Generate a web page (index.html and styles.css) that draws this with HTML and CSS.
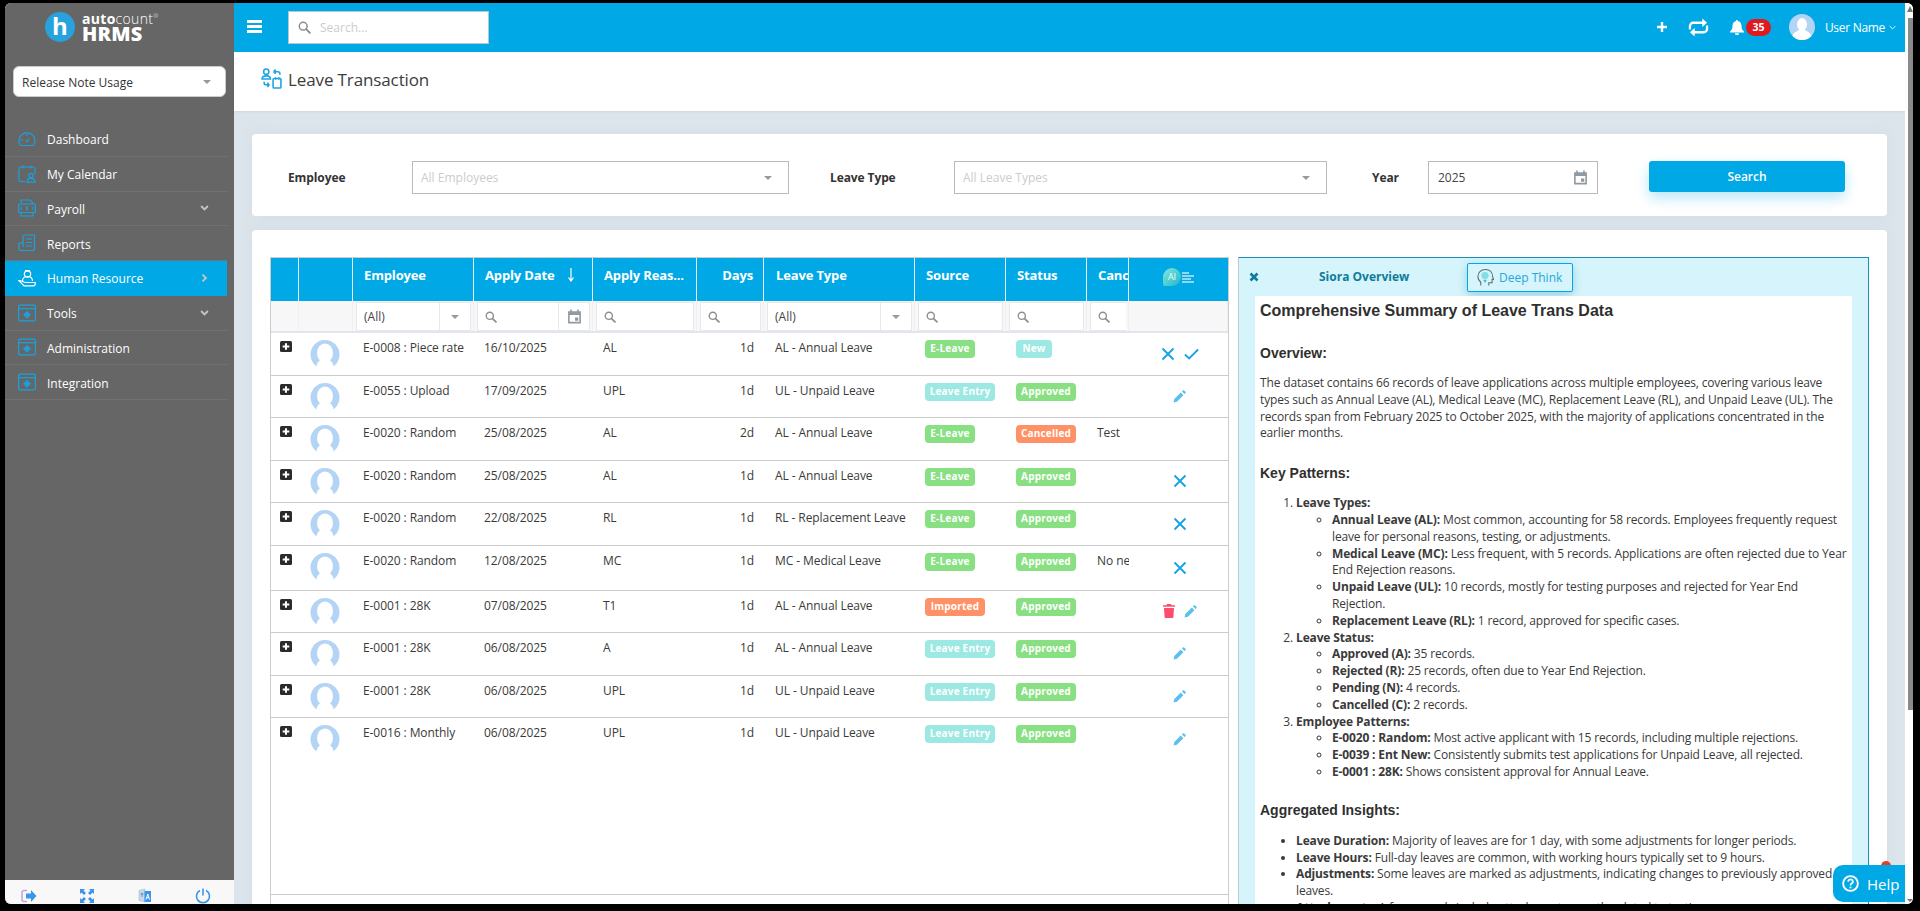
FILE: index.html
```html
<!DOCTYPE html>
<html lang="en">
<head>
<meta charset="utf-8">
<title>Leave Transaction</title>
<link rel="stylesheet" href="styles.css">
</head>
<body>
<svg class="defs" width="0" height="0" aria-hidden="true">
  <symbol id="i-search" viewBox="0 0 14 14"><circle cx="5.6" cy="5.6" r="4.2" fill="none" stroke="currentColor" stroke-width="1.6"/><path d="M8.8 8.8l4 4" stroke="currentColor" stroke-width="2" stroke-linecap="round"/></symbol>
  <symbol id="i-cal" viewBox="0 0 14 14"><path fill="currentColor" d="M1 2h2V.5h1.5V2h5V.5H11V2h2v11.5H1zM2.5 5.5v6.5h9V5.5zM7.5 8h3v3h-3z"/></symbol>
  <symbol id="i-pencil" viewBox="0 0 14 14"><path fill="currentColor" d="M0.6 13.4l.8-3.6 7-7 2.8 2.8-7 7zM9.6 1.6l1-1a1 1 0 0 1 1.4 0l1.4 1.4a1 1 0 0 1 0 1.4l-1 1z"/></symbol>
  <symbol id="i-x" viewBox="0 0 14 14"><path d="M1.5 1.5l11 11M12.5 1.5l-11 11" stroke="currentColor" stroke-width="1.9" fill="none"/></symbol>
  <symbol id="i-check" viewBox="0 0 16 12"><path d="M1 6.5l4.5 4.2L15 1.2" stroke="currentColor" stroke-width="2" fill="none"/></symbol>
  <symbol id="i-trash" viewBox="0 0 12 14"><path fill="currentColor" d="M4 0h4l.6 1.2H12v1.6H0V1.200h3.400zM1 4h10l-.6 9a1 1 0 0 1-1 1H2.600a1 1 0 0 1-1-1z"/></symbol>
  <symbol id="i-plusbox" viewBox="0 0 12 11"><rect width="12" height="11" rx="1.500" fill="#2b2b2b"/><path d="M6 2.200v6.600M2.700 5.500h6.600" stroke="#fff" stroke-width="2"/></symbol>
  <symbol id="i-avatar" viewBox="0 0 30 27"><circle cx="15" cy="14.500" r="14.500" fill="#b3d4f5"/><ellipse cx="15" cy="13" rx="8" ry="9.500" fill="#fff"/><path d="M6.500 27c0-4 3-7 4.500-7h8c1.500 0 4.500 3 4.500 7z" fill="#fff"/></symbol>
  <symbol id="i-window" viewBox="0 0 18 17"><rect x=".6" y=".6" width="16.800" height="15.800" rx="1.500" fill="none" stroke="currentColor" stroke-width="1.200"/><path d="M1 4.200h16" stroke="currentColor" stroke-width="1.200"/><circle cx="9" cy="10.200" r="2.800" fill="currentColor"/><circle cx="9" cy="10.200" r="1" fill="#666"/><path d="M9 6.400v7.600M5.200 10.200h7.600" stroke="currentColor" stroke-width="1.200"/></symbol>
  <symbol id="i-chev" viewBox="0 0 10 7"><path d="M1 1.200l4 4 4-4" fill="none" stroke="currentColor" stroke-width="2.200"/></symbol>
</svg>

<div class="window">
  <aside class="sidebar">
    <div class="logo">
      <span class="logo-mark">h</span>
      <span class="logo-text"><span class="logo-top"><b>auto</b>count<sup>®</sup></span><span class="logo-hrms">HRMS</span></span>
    </div>
    <div class="tenant"><span>Release Note Usage</span><i class="caret"></i></div>
    <nav class="menu">
      <a class="item"><svg class="ic" viewBox="0 0 18 16"><path d="M2.500 14.500A8 8 0 1 1 15.500 14.500z" fill="none" stroke="currentColor" stroke-width="1.200"/><path d="M7.500 10l5-3.500-3.500 5z" fill="currentColor"/><path d="M3 9h2M9 3v2" stroke="currentColor"/></svg><span>Dashboard</span></a>
      <a class="item"><svg class="ic" viewBox="0 0 18 18"><path d="M7 16.500H2.500a1.500 1.500 0 0 1-1.500-1.500V3.500A1.500 1.500 0 0 1 2.500 2h13A1.500 1.500 0 0 1 17 3.500V9" fill="none" stroke="currentColor" stroke-width="1.200"/><path d="M5 .5v3M13 .5v3" stroke="currentColor" stroke-width="1.200"/><circle cx="13" cy="10.500" r="2.200" fill="none" stroke="currentColor" stroke-width="1.200"/><path d="M9 17.200c0-5 8-5 8 0z" fill="none" stroke="currentColor" stroke-width="1.200"/></svg><span>My Calendar</span></a>
      <a class="item"><svg class="ic" viewBox="0 0 18 18"><path d="M3 4V1h9l3 3v1M15 13v4H3v-3" fill="none" stroke="currentColor" stroke-width="1.100"/><rect x=".6" y="5" width="16.800" height="8.500" rx="1" fill="none" stroke="currentColor" stroke-width="1.200"/><path d="M9 7v4.500" stroke="currentColor" stroke-width="1.400"/><path d="M3 7.500v3.500M15 7.500v3.500" stroke="currentColor"/></svg><span>Payroll</span><svg class="chev" viewBox="0 0 10 7"><use href="#i-chev"/></svg></a>
      <a class="item"><svg class="ic" viewBox="0 0 18 18"><path d="M5 13V2.500A1.500 1.500 0 0 1 6.500 1h10v13.500a2 2 0 0 1-2 2H2.500A1.800 1.800 0 0 1 1 14.500V9h4" fill="none" stroke="currentColor" stroke-width="1.200"/><path d="M8 5h6M8 8.500h6M8 12h6" stroke="currentColor" stroke-width="1.200"/></svg><span>Reports</span></a>
      <a class="item active"><svg class="ic" viewBox="0 0 18 18"><circle cx="9.500" cy="5" r="3.200" fill="none" stroke="currentColor" stroke-width="1.200"/><path d="M7 1.800h5" stroke="currentColor" stroke-width="1.600"/><path d="M4.500 12c0-3 2-4.500 5-4.500s5 1.500 5 4.500" fill="none" stroke="currentColor" stroke-width="1.200"/><path d="M.8 11.500c3 0 4.500 2 7 2h9.400v1.500c0 1-1 1.800-2 1.800H6z" fill="none" stroke="currentColor" stroke-width="1.200"/></svg><span>Human Resource</span><svg class="chev right" viewBox="0 0 10 7"><use href="#i-chev"/></svg></a>
      <a class="item"><svg class="ic"><use href="#i-window"/></svg><span>Tools</span><svg class="chev" viewBox="0 0 10 7"><use href="#i-chev"/></svg></a>
      <a class="item"><svg class="ic"><use href="#i-window"/></svg><span>Administration</span></a>
      <a class="item"><svg class="ic"><use href="#i-window"/></svg><span>Integration</span></a>
    </nav>
    <div class="side-foot">
      <svg viewBox="0 0 16 14"><path d="M6 1.500H3A2 2 0 0 0 1 3.500v7a2 2 0 0 0 2 2h3" fill="none" stroke="#b9a6e8" stroke-width="1.500"/><path d="M5 4.500h5V1l5.500 6-5.500 6V9.500H5z" fill="#3b95e8"/></svg>
      <svg viewBox="0 0 16 16"><path fill="#3b95e8" d="M1 1h5L4.500 2.500 7 5 5 7 2.500 4.500 1 6zM15 1v5l-1.500-1.500L11 7 9 5l2.500-2.500L10 1zM1 15v-5l1.500 1.500L5 9l2 2-2.500 2.500L6 15zM15 15h-5l1.500-1.500L9 11l2-2 2.500 2.500L15 10z"/></svg>
      <svg viewBox="0 0 14 16"><path d="M1 2.500l6-1.500v13l-6-1.500z" fill="#c8d9ee" stroke="#9db8d8" stroke-width=".6"/><path d="M6.500 3H13v11H6.500z" fill="#3b95e8"/><path d="M8 11.500L9.800 6l1.700 5.500M8.700 9.800h2.200" stroke="#fff" fill="none"/><path d="M2.500 6h3M4 4.500V9" stroke="#5c7fa8" stroke-width=".8"/></svg>
      <svg viewBox="0 0 16 16"><path d="M5 2.500a6.500 6.500 0 1 0 6 0" fill="none" stroke="#3b95e8" stroke-width="1.600"/><path d="M8 .5v7" stroke="#3b95e8" stroke-width="1.600"/></svg>
    </div>
  </aside>

  <div class="main">
    <header class="topbar">
      <div class="burger"><i></i><i></i><i></i></div>
      <div class="searchbox"><svg class="s-ic"><use href="#i-search"/></svg><span>Search...</span></div>
      <div class="top-right">
        <svg class="t-plus" viewBox="0 0 10 10"><path d="M5 0v10M0 5h10" stroke="#fff" stroke-width="2.400"/></svg>
        <svg class="t-repeat" viewBox="0 0 22 20"><path d="M2 12V8.500A3.500 3.500 0 0 1 5.500 5H16" fill="none" stroke="#fff" stroke-width="2.400"/><path d="M15 .5l5 4.500-5 4.500z" fill="#fff"/><path d="M20 8v3.500a3.500 3.500 0 0 1-3.500 3.500H6" fill="none" stroke="#fff" stroke-width="2.400"/><path d="M7 10.500L2 15l5 4.500z" fill="#fff"/></svg>
        <svg class="t-bell" viewBox="0 0 14 15"><path fill="#fff" d="M7 0a1 1 0 0 1 1 1.100c2.400.5 3.500 2.500 3.500 4.900 0 3 .9 4 2.500 5.500v.9H0v-.9C1.600 10 2.500 9 2.500 6c0-2.400 1.100-4.400 3.500-4.900A1 1 0 0 1 7 0zM5 13.200h4a2 2 0 0 1-4 0z"/></svg>
        <span class="t-badge">35</span>
        <svg class="t-avatar" viewBox="0 0 26 26"><circle cx="13" cy="13" r="13" fill="#b3d4f5"/><ellipse cx="13" cy="10.500" rx="5" ry="6.500" fill="#fff"/><path d="M3.500 22c1-4 5-4.500 6.500-6h6c1.500 1.500 5.500 2 6.500 6a13 13 0 0 1-19 0z" fill="#fff"/></svg>
        <span class="t-name">User Name</span>
        <svg class="t-chev" viewBox="0 0 10 7"><path d="M1 1.500l4 4 4-4" fill="none" stroke="#fff" stroke-width="1.300"/></svg>
      </div>
    </header>

    <div class="page-head">
      <svg class="page-ic" viewBox="0 0 20 20"><g fill="none" stroke="#1ca3e8" stroke-width="1.500"><circle cx="5" cy="3.500" r="2.500"/><path d="M1 10.500c0-4 8-4 8 0z"/><path d="M12 3.500h4a2 2 0 0 1 2 2v1M12 3.500l2-2M12 3.500l2 2"/><path d="M8 16h-3a2 2 0 0 1-2-2v-1M8 16l-2-2M8 16l-2 2"/><rect x="11.500" y="10" width="7.500" height="9" rx="1"/></g><path d="M14 8.500v3M17 8.500v3" stroke="#1ca3e8"/></svg>
      <h1>Leave Transaction</h1>
    </div>

    <div class="content">
      <section class="filters">
        <label class="f-emp">Employee</label>
        <div class="dd w-emp"><span>All Employees</span><i class="caret"></i></div>
        <label class="f-type">Leave Type</label>
        <div class="dd w-type"><span>All Leave Types</span><i class="caret"></i></div>
        <label class="f-year">Year</label>
        <div class="dd w-year"><span class="val">2025</span><svg class="cal"><use href="#i-cal"/></svg></div>
        <button class="btn-search">Search</button>
      </section>

      <section class="results">
        <div class="table">
          <div class="cols thead">
            <div></div><div></div>
            <div>Employee</div>
            <div class="sort">Apply Date<svg viewBox="0 0 8 14"><path d="M4 0v12M1.500 9.500L4 13l2.500-3.500" fill="none" stroke="#fff" stroke-width="1.200"/></svg></div>
            <div>Apply Reas...</div>
            <div class="right">Days</div>
            <div>Leave Type</div>
            <div>Source</div>
            <div>Status</div>
            <div class="clip">Cancel</div>
            <div class="ai-head"><span class="ai">AI</span><svg viewBox="0 0 12 11"><path d="M0 1h7M0 4h12M0 7h9M0 10h12" stroke="#bfeaf7" stroke-width="1.300"/></svg></div>
          </div>
          <div class="cols tfilter">
            <div></div><div></div>
            <div><div class="fi"><span class="fi-main">(All)</span><span class="fi-btn"><i class="caret"></i></span></div></div>
            <div><div class="fi"><span class="fi-main"><svg class="mag"><use href="#i-search"/></svg></span><span class="fi-btn"><svg class="cal"><use href="#i-cal"/></svg></span></div></div>
            <div><div class="fi"><svg class="mag"><use href="#i-search"/></svg></div></div>
            <div><div class="fi"><svg class="mag"><use href="#i-search"/></svg></div></div>
            <div><div class="fi"><span class="fi-main">(All)</span><span class="fi-btn"><i class="caret"></i></span></div></div>
            <div><div class="fi"><svg class="mag"><use href="#i-search"/></svg></div></div>
            <div><div class="fi"><svg class="mag"><use href="#i-search"/></svg></div></div>
            <div><div class="fi flush"><svg class="mag"><use href="#i-search"/></svg></div></div>
            <div></div>
          </div>
          <div class="rows">
            <div class="cols row">
              <div class="exp"><svg><use href="#i-plusbox"/></svg></div><div class="av"><svg><use href="#i-avatar"/></svg></div>
              <div>E-0008 : Piece rate</div><div>16/10/2025</div><div>AL</div><div class="right">1d</div><div>AL - Annual Leave</div>
              <div><span class="badge green w50">E-Leave</span></div><div><span class="badge teal w36">New</span></div><div class="clip"></div>
              <div class="act"><svg class="a-x"><use href="#i-x"/></svg><svg class="a-check"><use href="#i-check"/></svg></div>
            </div>
            <div class="cols row">
              <div class="exp"><svg><use href="#i-plusbox"/></svg></div><div class="av"><svg><use href="#i-avatar"/></svg></div>
              <div>E-0055 : Upload</div><div>17/09/2025</div><div>UPL</div><div class="right">1d</div><div>UL - Unpaid Leave</div>
              <div><span class="badge teal w70">Leave Entry</span></div><div><span class="badge green w60">Approved</span></div><div class="clip"></div>
              <div class="act"><svg class="a-pen"><use href="#i-pencil"/></svg></div>
            </div>
            <div class="cols row">
              <div class="exp"><svg><use href="#i-plusbox"/></svg></div><div class="av"><svg><use href="#i-avatar"/></svg></div>
              <div>E-0020 : Random</div><div>25/08/2025</div><div>AL</div><div class="right">2d</div><div>AL - Annual Leave</div>
              <div><span class="badge green w50">E-Leave</span></div><div><span class="badge orange w60">Cancelled</span></div><div class="clip">Test</div>
              <div class="act"></div>
            </div>
            <div class="cols row">
              <div class="exp"><svg><use href="#i-plusbox"/></svg></div><div class="av"><svg><use href="#i-avatar"/></svg></div>
              <div>E-0020 : Random</div><div>25/08/2025</div><div>AL</div><div class="right">1d</div><div>AL - Annual Leave</div>
              <div><span class="badge green w50">E-Leave</span></div><div><span class="badge green w60">Approved</span></div><div class="clip"></div>
              <div class="act"><svg class="a-x"><use href="#i-x"/></svg></div>
            </div>
            <div class="cols row">
              <div class="exp"><svg><use href="#i-plusbox"/></svg></div><div class="av"><svg><use href="#i-avatar"/></svg></div>
              <div>E-0020 : Random</div><div>22/08/2025</div><div>RL</div><div class="right">1d</div><div>RL - Replacement Leave</div>
              <div><span class="badge green w50">E-Leave</span></div><div><span class="badge green w60">Approved</span></div><div class="clip"></div>
              <div class="act"><svg class="a-x"><use href="#i-x"/></svg></div>
            </div>
            <div class="cols row tall">
              <div class="exp"><svg><use href="#i-plusbox"/></svg></div><div class="av"><svg><use href="#i-avatar"/></svg></div>
              <div>E-0020 : Random</div><div>12/08/2025</div><div>MC</div><div class="right">1d</div><div>MC - Medical Leave</div>
              <div><span class="badge green w50">E-Leave</span></div><div><span class="badge green w60">Approved</span></div><div class="clip">No need</div>
              <div class="act"><svg class="a-x"><use href="#i-x"/></svg></div>
            </div>
            <div class="cols row">
              <div class="exp"><svg><use href="#i-plusbox"/></svg></div><div class="av"><svg><use href="#i-avatar"/></svg></div>
              <div>E-0001 : 28K</div><div>07/08/2025</div><div>T1</div><div class="right">1d</div><div>AL - Annual Leave</div>
              <div><span class="badge orange w60">Imported</span></div><div><span class="badge green w60">Approved</span></div><div class="clip"></div>
              <div class="act"><svg class="a-trash"><use href="#i-trash"/></svg><svg class="a-pen"><use href="#i-pencil"/></svg></div>
            </div>
            <div class="cols row">
              <div class="exp"><svg><use href="#i-plusbox"/></svg></div><div class="av"><svg><use href="#i-avatar"/></svg></div>
              <div>E-0001 : 28K</div><div>06/08/2025</div><div>A</div><div class="right">1d</div><div>AL - Annual Leave</div>
              <div><span class="badge teal w70">Leave Entry</span></div><div><span class="badge green w60">Approved</span></div><div class="clip"></div>
              <div class="act"><svg class="a-pen"><use href="#i-pencil"/></svg></div>
            </div>
            <div class="cols row">
              <div class="exp"><svg><use href="#i-plusbox"/></svg></div><div class="av"><svg><use href="#i-avatar"/></svg></div>
              <div>E-0001 : 28K</div><div>06/08/2025</div><div>UPL</div><div class="right">1d</div><div>UL - Unpaid Leave</div>
              <div><span class="badge teal w70">Leave Entry</span></div><div><span class="badge green w60">Approved</span></div><div class="clip"></div>
              <div class="act"><svg class="a-pen"><use href="#i-pencil"/></svg></div>
            </div>
            <div class="cols row last">
              <div class="exp"><svg><use href="#i-plusbox"/></svg></div><div class="av"><svg><use href="#i-avatar"/></svg></div>
              <div>E-0016 : Monthly</div><div>06/08/2025</div><div>UPL</div><div class="right">1d</div><div>UL - Unpaid Leave</div>
              <div><span class="badge teal w70">Leave Entry</span></div><div><span class="badge green w60">Approved</span></div><div class="clip"></div>
              <div class="act"><svg class="a-pen"><use href="#i-pencil"/></svg></div>
            </div>
          </div>
        </div>

        <aside class="siora">
          <div class="siora-head">
            <svg class="siora-x" viewBox="0 0 10 10"><path d="M1.500 1.500l7 7M8.500 1.500l-7 7" stroke="#0e7c9c" stroke-width="2.600"/></svg>
            <span class="siora-title">Siora Overview</span>
            <button class="deep"><svg viewBox="0 0 18 19"><path d="M4 18v-3.500C2 13 1 11 1 8.500 1 4 4.500 1 9 1s7.500 3 7.500 7.500l1 3h-1.500v3.500h-3.500V18" fill="none" stroke="#5b6b72" stroke-width="1.100"/><circle cx="8.500" cy="7.500" r="3.800" fill="#7fe0e6"/><path d="M7 12.500h3M7.500 14h2" stroke="#2aa7b8" stroke-width="1"/></svg><span>Deep Think</span></button>
          </div>
          <div class="siora-body">
            <h2>Comprehensive Summary of Leave Trans Data</h2>
            <h3 class="h-over">Overview:</h3>
            <p>The dataset contains 66 records of leave applications across multiple employees, covering various leave types such as Annual Leave (AL), Medical Leave (MC), Replacement Leave (RL), and Unpaid Leave (UL). The records span from February 2025 to October 2025, with the majority of applications concentrated in the earlier months.</p>
            <h3 class="h-key">Key Patterns:</h3>
            <ol>
              <li><b>Leave Types:</b>
                <ul>
                  <li><b>Annual Leave (AL):</b> Most common, accounting for 58 records. Employees frequently request leave for personal reasons, testing, or adjustments.</li>
                  <li><b>Medical Leave (MC):</b> Less frequent, with 5 records. Applications are often rejected due to Year End Rejection reasons.</li>
                  <li><b>Unpaid Leave (UL):</b> 10 records, mostly for testing purposes and rejected for Year End Rejection.</li>
                  <li><b>Replacement Leave (RL):</b> 1 record, approved for specific cases.</li>
                </ul>
              </li>
              <li><b>Leave Status:</b>
                <ul>
                  <li><b>Approved (A):</b> 35 records.</li>
                  <li><b>Rejected (R):</b> 25 records, often due to Year End Rejection.</li>
                  <li><b>Pending (N):</b> 4 records.</li>
                  <li><b>Cancelled (C):</b> 2 records.</li>
                </ul>
              </li>
              <li><b>Employee Patterns:</b>
                <ul>
                  <li><b>E-0020 : Random:</b> Most active applicant with 15 records, including multiple rejections.</li>
                  <li><b>E-0039 : Ent New:</b> Consistently submits test applications for Unpaid Leave, all rejected.</li>
                  <li><b>E-0001 : 28K:</b> Shows consistent approval for Annual Leave.</li>
                </ul>
              </li>
            </ol>
            <h3 class="h-agg">Aggregated Insights:</h3>
            <ul class="insights">
              <li><b>Leave Duration:</b> Majority of leaves are for 1 day, with some adjustments for longer periods.</li>
              <li><b>Leave Hours:</b> Full-day leaves are common, with working hours typically set to 9 hours.</li>
              <li><b>Adjustments:</b> Some leaves are marked as adjustments, indicating changes to previously approved leaves.</li>
              <li><b>Attachments:</b> A few records include attachments, mostly related to testing.</li>
            </ul>
          </div>
        </aside>
      </section>
    </div>
  </div>

  <div class="scroll">
    <i class="sb-up"></i>
    <div class="sb-thumb"></div>
    <i class="sb-down"></i>
  </div>

  <i class="help-dot"></i>
  <div class="help">
    <svg viewBox="0 0 18 18"><circle cx="9" cy="9" r="7.800" fill="none" stroke="#fff" stroke-width="2"/><path d="M6.500 7a2.500 2.300 0 1 1 3.600 2.100C9.300 9.600 9 10 9 11" fill="none" stroke="#fff" stroke-width="1.800"/><circle cx="9" cy="13.300" r="1.100" fill="#fff"/></svg>
    <span>Help</span>
  </div>
</div>
</body>
</html>
```
FILE: styles.css
```css
* { box-sizing: border-box; }
html, body { margin: 0; height: 911px; overflow: hidden; background: #000; }
body { padding: 3px 7px 7px 5px; font-family: "Open Sans", "Noto Sans", sans-serif; font-size: 12px; color: #333; }
.defs { position: absolute; }

.window { position: relative; display: flex; width: 1908px; height: 901px; background: #fff; border-radius: 6px; overflow: hidden; }

/* sidebar */
.sidebar { width: 229px; flex: none; display: flex; flex-direction: column; background: #666; color: #fff; }
.logo { height: 54px; display: flex; align-items: flex-start; padding: 9px 0 0 40px; }
.logo-mark { width: 30px; height: 30px; border-radius: 50%; background: #27a2dc; color: #fff; font: 700 24px/27px "Open Sans", sans-serif; text-align: center; }
.logo-text { display: flex; flex-direction: column; margin-left: 7px; }
.logo-top { font: 300 14px/13px "Open Sans", sans-serif; letter-spacing: .3px; }
.logo-top b { font-weight: 700; }
.logo-top sup { font-size: 6px; line-height: 0; }
.logo-hrms { font: 800 20px/17px "Open Sans", sans-serif; letter-spacing: .2px; }
.tenant { display: flex; align-items: center; justify-content: space-between; height: 31px; margin: 9px 8px 0; padding: 1px 14px 0 8px; background: #fff; border: 1px solid #ccc; border-radius: 6px; color: #333; font-size: 12px; }
.caret { display: inline-block; flex: none; width: 0; height: 0; border-left: 4px solid transparent; border-right: 4px solid transparent; border-top: 4px solid #999; }
.menu { display: flex; flex-direction: column; margin-top: 25px; flex: 1; }
.item { display: flex; align-items: center; height: 34.75px; width: 222px; padding-left: 13px; color: #fff; border-bottom: 1px solid #727272; font-size: 12px; }
.item span { padding-top: 2px; }
.item .ic { width: 18px; height: 18px; flex: none; color: #17a3e0; margin-right: 11px; }
.item.active { background: #00a9e6; border-bottom-color: #00a9e6; }
.item.active .ic { color: #fff; }
.chev { width: 9px; height: 6px; margin-left: auto; margin-right: 18px; color: #c4c4c4; }
.chev.right { transform: rotate(-90deg); }
.side-foot { display: grid; grid-template-columns: repeat(4, 58px); height: 24px; margin-left: -5px; background: #f8f8f8; justify-items: center; align-items: center; width: 234px; padding-top: 7px; }
.side-foot svg { width: 16px; height: 16px; }

/* main */
.main { width: 1671px; flex: none; display: flex; flex-direction: column; }
.topbar { height: 49px; flex: none; display: flex; align-items: center; padding: 0 9px 0 13px; background: #00a9e6; color: #fff; }
.burger { width: 15px; display: flex; flex-direction: column; gap: 2px; margin-top: -3px; }
.burger i { height: 3px; background: #fff; }
.searchbox { display: flex; align-items: center; width: 201px; height: 33px; margin: -1px 0 0 26px; padding-left: 9px; background: #fff; border: 1px solid #b9c6cc; color: #ccc; }
.s-ic { width: 13px; height: 13px; color: #8c8c8c; margin-right: 9px; }
.top-right { margin-left: auto; display: flex; align-items: center; margin-top: -1px; }
.t-plus { width: 10px; height: 10px; margin-right: 21px; }
.t-repeat { width: 21px; height: 19px; margin-right: 21px; }
.t-bell { width: 14px; height: 15px; margin-right: 2px; }
.t-badge { width: 25px; height: 17px; margin-right: 18px; border-radius: 9px; background: #e2181f; color: #fff; text-align: center; font: 700 10.5px/17px "Open Sans", sans-serif; }
.t-avatar { width: 26px; height: 26px; margin-right: 10px; }
.t-name { font-size: 12px; letter-spacing: -.3px; }
.t-chev { width: 7px; height: 5px; margin-left: 4px; }

.page-head { height: 59px; flex: none; display: flex; align-items: center; padding-left: 27px; background: #fff; box-shadow: 0 1px 2px rgba(0,0,0,.06); position: relative; }
.page-ic { width: 21px; height: 21px; margin: -6px 6px 0 0; }
.page-head h1 { margin: 0 0 5px; font-size: 17px; font-weight: 500; letter-spacing: -.12px; color: #3c3c3c; }

.content { flex: 1; min-height: 0; padding: 23px 18px 0; background: #dde5ec; overflow: hidden; }
.filters { display: flex; align-items: flex-start; height: 82px; padding: 27px 0 0 36px; background: #fff; border-radius: 4px; box-shadow: 0 0 14px rgba(180,195,210,.25); }
.filters label { font-weight: 700; color: #333; line-height: 33px; white-space: nowrap; letter-spacing: -.1px; }
.f-emp { width: 124px; }
.f-type { width: 125px; margin-left: 41px; margin-right: -1px; }
.f-year { width: 56px; margin-left: 45px; }
.dd { display: flex; align-items: center; justify-content: space-between; height: 33px; padding: 0 9px 0 8px; border: 1px solid #bbb; color: #ccc; background: #fff; }
.dd .caret { margin-right: 7px; }
.dd .val { color: #444; padding-left: 1px; }
.w-emp { width: 377px; }
.w-type { width: 373px; }
.w-year { width: 170px; }
.cal { width: 15px; height: 15px; color: #8f9aa3; }
.btn-search { width: 196px; height: 31px; margin-left: 51px; border: 0; border-radius: 3px; background: #00a9e6; color: #fff; font: 600 12px "Open Sans", sans-serif; box-shadow: 0 6px 14px rgba(0,169,230,.28); }

.results { display: flex; align-items: flex-start; gap: 9px; height: 700px; margin-top: 14px; padding: 27px 18px 0; background: #fff; border-radius: 4px; box-shadow: 0 0 14px rgba(180,195,210,.25); }

/* table */
.table { width: 959px; flex: none; height: 660px; border: solid #ccc; border-width: 1px 1px 0; }
.cols { display: grid; grid-template-columns: 28px 54px 121px 119px 104px 67px 151px 91px 81px 42px 99px; }
.thead { height: 43px; background: #00a9e6; color: #fff; font-weight: 700; font-size: 13px; letter-spacing: -.15px; }
.thead > div { display: flex; align-items: center; padding: 0 0 10px 11px; border-right: 1px solid #e6f6fc; white-space: nowrap; overflow: hidden; }
.thead > div:nth-child(7) { padding-left: 12px; }
.thead > div:last-child { border-right: 0; }
.thead .right { justify-content: flex-end; padding-right: 10px; }
.sort svg { width: 8px; height: 14px; margin-left: 13px; }
.ai-head { justify-content: center; padding: 0 0 5px !important; gap: 1px; }
.ai { width: 18px; height: 18px; border-radius: 50% 50% 50% 10%; background: linear-gradient(135deg, #86e6da, #1fb7c8); color: #f2ffff; font: 400 9px/18px "Open Sans", sans-serif; text-align: center; letter-spacing: 0; }
.ai-head svg { width: 12px; height: 11px; }
.tfilter { height: 32px; background: #f7f7f7; border-bottom: 2px solid #e4e4ec; }
.tfilter > div { padding: 1px 2px 0 3px; border-right: 1px solid #f0f0f0; }
.fi { display: flex; align-items: center; height: 29px; background: #fff; border: 1px solid #e7e7f0; padding-left: 7px; color: #444; overflow: hidden; }
.fi.flush { border-right: 0; }
.fi-main { flex: 1; display: flex; align-items: center; }
.fi-btn { width: 31px; height: 100%; flex: none; display: flex; align-items: center; justify-content: center; border-left: 1px solid #e7e7f0; }
.mag { width: 12px; height: 12px; color: #8e8e8e; }

.rows { height: 562px; border-bottom: 1px solid #ccc; }
.row { height: 42.5px; border-bottom: 1px solid #ccc; line-height: 17px; color: #3a3a3a; letter-spacing: -.08px; }
.row.tall { height: 45px; }
.row.last { border-bottom: 0; }
.row > div { padding: 6px 0 0 10px; white-space: nowrap; overflow: hidden; }
.row > div:nth-child(7) { padding-left: 11px; }
.row > .right { padding: 6px 10px 0 0; text-align: right; }
.row > .exp { padding: 8px 0 0 9px; }
.exp svg { width: 12px; height: 11px; display: block; }
.row > .av { padding: 7px 0 0 11px; }
.av svg { width: 30px; height: 27px; display: block; }
.row > .act { display: flex; align-items: center; justify-content: center; gap: 9px; padding: 0 0 0 2px; }
.badge { display: block; height: 18px; border-radius: 4px; color: #fff; font-weight: 700; font-size: 10px; line-height: 17px; text-align: center; margin-top: 1px; letter-spacing: .2px; }
.green { background: #88e082; }
.teal { background: #9ce8e2; }
.orange { background: #ff9166; }
.w36 { width: 36px; } .w50 { width: 50px; } .w60 { width: 60px; } .w70 { width: 70px; }
.a-x { width: 14px; height: 14px; color: #17a3e6; }
.a-check { width: 15px; height: 12px; color: #17a3e6; }
.a-pen { width: 13px; height: 13px; color: #5cc0ee; }
.a-trash { width: 12px; height: 14px; color: #fb4d6d; }

/* siora */
.siora { width: 631px; height: 660px; flex: none; display: flex; flex-direction: column; background: #d5f4fb; border: solid #1a8eb5; border-width: 1px 1px 0 0; border-left: 1px solid #bcc; }
.siora-head { height: 38px; flex: none; display: flex; align-items: center; padding-left: 10px; }
.siora-x { width: 10px; height: 10px; margin-top: -1px; }
.siora-title { margin-left: 60px; font-weight: 700; color: #0e7c9c; width: 88px; white-space: nowrap; margin-top: -1px; }
.deep { display: flex; align-items: center; gap: 5px; width: 106px; height: 29px; margin: 0 0 0 60px; padding: 0 0 0 9px; background: #d5f4fb; border: 1px solid #00a9e6; border-radius: 2px; color: #27a7dc; font: 400 12px "Open Sans", sans-serif; box-shadow: 0 3px 8px rgba(0,130,170,.3); }
.deep svg { width: 17px; height: 19px; }
.siora-body { flex: 1; margin: 0 16px; padding: 5px 2px 0 5px; background: #fff; font-size: 12px; line-height: 16.8px; color: #3a3a3a; letter-spacing: -.15px; }
.siora-body h2, .siora-body h3 { font-family: "Liberation Sans", Arial, sans-serif; font-weight: 700; color: #2f2f2f; margin: 0; letter-spacing: 0; }
.siora-body h2 { font-size: 16px; line-height: 20px; }
.siora-body h3 { font-size: 14px; line-height: 16px; }
.h-over { margin-top: 24px !important; }
.siora-body p { margin: 14px 0 0; }
.h-key { margin-top: 23px !important; }
.siora-body ol { margin: 14px 0 0; padding-left: 36px; }
.siora-body ol ul { margin: 0; padding-left: 36px; list-style: circle; }
.h-agg { margin-top: 21px !important; }
.insights { margin: 15px 0 0; padding-left: 36px; list-style: disc; }

/* page scrollbar */
.scroll { width: 8px; flex: none; background: #fff; display: flex; flex-direction: column; align-items: flex-end; padding-top: 3px; }
.sb-up { width: 0; height: 0; border-left: 3px solid transparent; border-right: 3px solid transparent; border-bottom: 6px solid #777; }
.sb-thumb { width: 5px; height: 692px; margin-top: 6px; background: #8a8a8a; }
.sb-down { margin-top: auto; margin-bottom: 2px; width: 0; height: 0; border-left: 3px solid transparent; border-top: 3px solid #777; border-right: 3px solid transparent; }

/* help */
.help-dot { position: absolute; right: 22px; bottom: 37px; width: 10px; height: 6px; border-radius: 5px 5px 0 0; background: #e0402a; }
.help { position: absolute; right: 8px; bottom: 2px; display: flex; align-items: center; gap: 8px; width: 72px; height: 37px; padding-left: 9px; background: #00a9e6; border-radius: 10px 0 0 10px; color: #fff; font-size: 15px; }
.help svg { width: 17px; height: 17px; }
```
